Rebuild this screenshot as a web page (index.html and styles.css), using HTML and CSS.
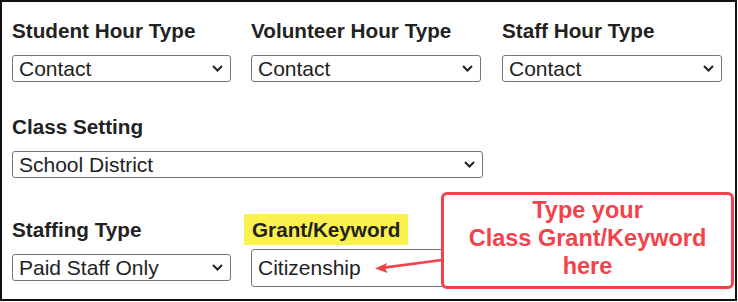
FILE: index.html
```html
<html>

<head>
    <title>class details</title>
    <link rel="stylesheet" href="styles.css">
</head>

<body>
    <div class="frame">
        <div class="row row-first">
            <div class="field col-a">
                <div class="label">Student Hour Type</div>
                <div class="pick-wrap">
                    <select class="pick"><option>Contact</option></select>
                    <svg class="chev" width="11" height="7" viewBox="0 0 11 7"><path d="M1 1 L5.5 5.5 L10 1" /></svg>
                </div>
            </div>
            <div class="field col-b">
                <div class="label">Volunteer Hour Type</div>
                <div class="pick-wrap">
                    <select class="pick"><option>Contact</option></select>
                    <svg class="chev" width="11" height="7" viewBox="0 0 11 7"><path d="M1 1 L5.5 5.5 L10 1" /></svg>
                </div>
            </div>
            <div class="field col-c">
                <div class="label">Staff Hour Type</div>
                <div class="pick-wrap">
                    <select class="pick"><option>Contact</option></select>
                    <svg class="chev" width="11" height="7" viewBox="0 0 11 7"><path d="M1 1 L5.5 5.5 L10 1" /></svg>
                </div>
            </div>
        </div>
        <div class="row row-second">
            <div class="field col-wide">
                <div class="label">Class Setting</div>
                <div class="pick-wrap">
                    <select class="pick"><option>School District</option></select>
                    <svg class="chev" width="11" height="7" viewBox="0 0 11 7"><path d="M1 1 L5.5 5.5 L10 1" /></svg>
                </div>
            </div>
        </div>
        <div class="row row-third">
            <div class="field col-a">
                <div class="label">Staffing Type</div>
                <div class="pick-wrap">
                    <select class="pick"><option>Paid Staff Only</option></select>
                    <svg class="chev" width="11" height="7" viewBox="0 0 11 7"><path d="M1 1 L5.5 5.5 L10 1" /></svg>
                </div>
            </div>
            <div class="field col-b">
                <div class="label"><span class="mark">Grant/Keyword</span></div>
                <input class="text-in" type="text" value="Citizenship">
            </div>
        </div>

        <!-- callout -->
        <svg class="arrow" width="80" height="30" viewBox="0 0 80 30">
            <line x1="74" y1="12" x2="16" y2="19.6" stroke="#f2434a" stroke-width="2.6" />
            <polygon points="7,20.4 19,15 17,20 19.5,25" fill="#f2434a" />
        </svg>
        <div class="callout">Type your<br>Class Grant/Keyword<br>here</div>
    </div>
</body>

</html>
```

FILE: styles.css
```css
* {
    margin: 0;
    padding: 0;
    box-sizing: border-box;
}

:root {
    --text-color: #222;
    --line-color: #767676;
    --mark-color: #faf14e;
    --note-color: #f2434a;
}

body {
    font-family: "Liberation Sans", Arial, sans-serif;
    color: var(--text-color);
    background: white;
}

.frame {
    position: relative;
    width: 737px;
    height: 301px;
    border: 2px solid #111;
    padding: 17px 0 0 10px;
    overflow: hidden;
}

.row {
    display: flex;
}

.row-second {
    margin-top: 33px;
}

.row-third {
    margin-top: 40px;
}

.col-a {
    width: 219px;
    margin-right: 20px;
}

.col-b {
    width: 230px;
    margin-right: 21px;
}

.col-c {
    width: 220px;
}

.col-wide {
    width: 471px;
}

.label {
    font-size: 20.7px;
    font-weight: bold;
    line-height: 24px;
    height: 24px;
    margin-bottom: 12px;
    white-space: nowrap;
}

.mark {
    display: inline-block;
    background-color: var(--mark-color);
    padding: 4px 8px 3px 8px;
    margin: -4px 0 0 -7px;
}

.pick-wrap {
    position: relative;
}

.pick {
    display: block;
    width: 100%;
    height: 27px;
    appearance: none;
    -webkit-appearance: none;
    font-family: "Liberation Sans", Arial, sans-serif;
    font-size: 21px;
    color: var(--text-color);
    background: white;
    border: 1px solid var(--line-color);
    border-radius: 3px;
    padding: 0 24px 0 6px;
}

.chev {
    position: absolute;
    right: 8px;
    top: 10px;
    fill: none;
    stroke: #222;
    stroke-width: 2;
    pointer-events: none;
}

.text-in {
    display: block;
    width: 230px;
    height: 38px;
    margin-top: -5px;
    font-family: "Liberation Sans", Arial, sans-serif;
    font-size: 21px;
    color: var(--text-color);
    border: 1px solid var(--line-color);
    border-radius: 3px;
    padding: 0 6px;
    outline: none;
}

.callout {
    position: absolute;
    left: 439px;
    top: 190px;
    width: 293px;
    height: 97px;
    border: 3px solid var(--note-color);
    border-radius: 6px;
    background: white;
    color: var(--note-color);
    font-size: 23.5px;
    font-weight: bold;
    line-height: 28px;
    text-align: center;
    padding-top: 1px;
}

.arrow {
    position: absolute;
    left: 366px;
    top: 246px;
}
```
